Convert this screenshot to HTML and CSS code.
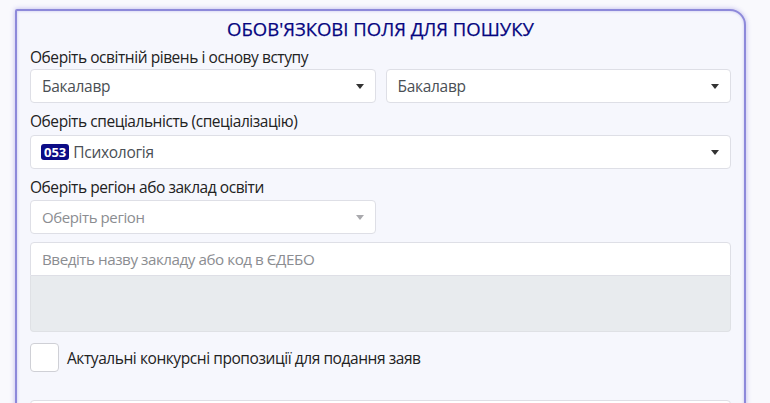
FILE: index.html
```html
<!DOCTYPE html>
<html lang="uk">
<head>
<meta charset="utf-8">
<title>Пошук</title>
<link rel="stylesheet" href="styles.css">
</head>
<body>
<div class="card">
  <h2 class="title">ОБОВ'ЯЗКОВІ ПОЛЯ ДЛЯ ПОШУКУ</h2>

  <div class="label l1">Оберіть освітній рівень і основу вступу</div>
  <div class="row s1">
    <div class="select">
      <span class="value">Бакалавр</span>
      <span class="caret"></span>
    </div>
    <div class="select">
      <span class="value">Бакалавр</span>
      <span class="caret"></span>
    </div>
  </div>

  <div class="label l2">Оберіть спеціальність (спеціалізацію)</div>
  <div class="select s2">
    <span class="value"><span class="badge">053</span>Психологія</span>
    <span class="caret"></span>
  </div>

  <div class="label l3">Оберіть регіон або заклад освіти</div>
  <div class="row s3">
    <div class="select">
      <span class="value placeholder">Оберіть регіон</span>
      <span class="caret light"></span>
    </div>
    <div class="spacer"></div>
  </div>

  <div class="input">
    <span class="placeholder">Введіть назву закладу або код в ЄДЕБО</span>
  </div>
  <div class="list"></div>

  <label class="check">
    <span class="box"></span>
    <span class="check-text">Актуальні конкурсні пропозиції для подання заяв</span>
  </label>

  <div class="next"></div>
</div>
</body>
</html>
```

FILE: styles.css
```css
html, body {
  margin: 0;
  padding: 0;
  background: #f9f9fd;
  font-family: "Open Sans", "Noto Sans", sans-serif;
  color: #212529;
  overflow: hidden;
}

.card {
  box-sizing: border-box;
  margin: 9px 0 0 15px;
  width: 731px;
  height: 420px;
  background: #f6f7fd;
  border: 2px solid #8d89da;
  border-radius: 2px 16px 0 0;
  box-shadow: 0 0 5px rgba(110, 100, 210, 0.45), inset 0 0 3px rgba(110, 100, 210, 0.35);
  padding: 0 13px;
}

.title {
  margin: 0;
  height: 35px;
  line-height: 35px;
  text-align: center;
  font-size: 18.5px;
  font-weight: 500;
  color: #050580;
  -webkit-text-stroke: 0.25px #050580;
}

.label {
  font-size: 15.5px;
  letter-spacing: -0.45px;
  line-height: 22px;
  height: 22px;
  color: #222;
}

.l2 { margin-top: 7px; }
.l3 { margin-top: 7px; }

.row {
  display: grid;
  grid-template-columns: 1fr 1fr;
  gap: 10px;
}

.s1 { margin-top: 1px; }
.s2 { margin-top: 3px; }
.s3 { margin-top: 2px; }

.select {
  box-sizing: border-box;
  height: 34px;
  background: #fff;
  border: 1px solid #dedfe6;
  border-radius: 4px;
  display: flex;
  align-items: center;
  justify-content: space-between;
  padding: 0 11px 0 11px;
}

.value {
  font-size: 15.5px;
  letter-spacing: -0.3px;
  color: #4a4f55;
  display: flex;
  align-items: center;
}

.placeholder {
  color: #8b8d91;
  font-size: 15px;
  letter-spacing: -0.4px;
}

.caret {
  width: 0;
  height: 0;
  border-left: 4.5px solid transparent;
  border-right: 4.5px solid transparent;
  border-top: 5px solid #333;
}

.caret.light {
  border-top-color: #a9a9ad;
}

.badge {
  background: #0c0c86;
  color: #fff;
  font-size: 13px;
  font-weight: 700;
  letter-spacing: 0;
  line-height: 16px;
  height: 16px;
  padding: 0 3px;
  border-radius: 3px;
  margin-right: 4px;
  margin-left: -1px;
}

.input {
  box-sizing: border-box;
  margin-top: 8px;
  height: 34px;
  background: #fff;
  border: 1px solid #dedfe6;
  border-radius: 4px 4px 0 0;
  display: flex;
  align-items: center;
  padding: 0 11px;
}

.input .placeholder {
  font-size: 15.2px;
  letter-spacing: -0.45px;
}

.list {
  box-sizing: border-box;
  height: 56px;
  background: #e8ebee;
  border: 1px solid #dfe1e5;
  border-top: none;
  border-radius: 0 0 4px 4px;
}

.check {
  display: flex;
  align-items: center;
  margin-top: 11px;
  gap: 8px;
}

.box {
  box-sizing: border-box;
  width: 29px;
  height: 29px;
  background: #fff;
  border: 1px solid #cfd0d6;
  border-radius: 4px;
}

.check-text {
  font-size: 15.5px;
  letter-spacing: -0.43px;
  color: #222;
}

.next {
  margin-top: 28px;
  height: 34px;
  background: #fff;
  border: 1px solid #dedfe6;
  border-radius: 4px;
}
```
